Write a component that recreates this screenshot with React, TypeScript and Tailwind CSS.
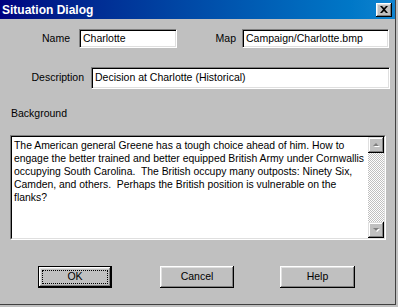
import React from "react";

const font = { fontFamily: '"Liberation Sans", Arial, sans-serif' };

function Field({ value, className }: { value: string; className: string }) {
  return (
    <div
      className={
        "bg-white border border-t-[#808080] border-l-[#808080] border-b-white border-r-white shadow-[inset_1px_1px_0_#000,inset_-1px_-1px_0_#dfdfdf] flex items-center pl-[3px] text-[10.5px] text-black whitespace-nowrap overflow-hidden " +
        className
      }
    >
      {value}
    </div>
  );
}

function Btn({ label, className, def }: { label: string; className: string; def?: boolean }) {
  return (
    <div className={"relative h-[22px] " + className + (def ? " border border-black" : "")}>
      <div className="w-full h-full bg-[#c0c0c0] shadow-[inset_-1px_-1px_0_#000,inset_1px_1px_0_#fff,inset_-2px_-2px_0_#808080,inset_2px_2px_0_#dfdfdf] flex items-center justify-center text-[10.5px] text-black">
        {label}
      </div>
      {def && <div className="absolute inset-[3px] border border-dotted border-black" />}
    </div>
  );
}

function ScrollBtn({ up }: { up?: boolean }) {
  return (
    <div className="w-[16px] h-[16px] bg-[#c0c0c0] shadow-[inset_-1px_-1px_0_#000,inset_1px_1px_0_#dfdfdf,inset_-2px_-2px_0_#808080,inset_2px_2px_0_#fff] flex items-center justify-center">
      <svg width="9" height="6" viewBox="0 0 9 6">
        {up ? (
          <>
            <polygon points="2,5 5,2 8,5" fill="#fff" />
            <polygon points="1,4 4,1 7,4" fill="#808080" />
          </>
        ) : (
          <>
            <polygon points="2,2 5,5 8,2" fill="#fff" />
            <polygon points="1,1 4,4 7,1" fill="#808080" />
          </>
        )}
      </svg>
    </div>
  );
}

const text = `The American general Greene has a tough choice ahead of him. How to
engage the better trained and better equipped British Army under Cornwallis
occupying South Carolina.  The British occupy many outposts: Ninety Six,
Camden, and others.  Perhaps the British position is vulnerable on the
flanks?`;

export default function App() {
  return (
    <div className="w-[398px] h-[307px] bg-[#c0c0c0]" style={font}>
      <div className="w-[396px] h-[305px] bg-[#c0c0c0] border-r border-b border-r-[#404040] border-b-[#404040] flex flex-col">
        {/* title bar */}
        <div className="h-[19px] w-[395px] bg-gradient-to-r from-[#000080] to-[#1084d0] flex items-center justify-between pl-[2px] pr-[3px]">
          <span className="text-white font-bold text-[12px] leading-none">Situation Dialog</span>
          <div className="w-[16px] h-[14px] bg-[#c0c0c0] shadow-[inset_-1px_-1px_0_#000,inset_1px_1px_0_#fff,inset_-2px_-2px_0_#808080,inset_2px_2px_0_#dfdfdf] flex items-center justify-center">
            <svg width="8" height="7" viewBox="0 0 8 7">
              <path d="M0 0h2l2 2 2-2h2L5 3.5 8 7H6L4 5 2 7H0l3-3.5z" fill="#000" />
            </svg>
          </div>
        </div>

        {/* row 1 */}
        <div className="flex items-center mt-[10px] text-[10.5px] text-black">
          <div className="w-[70px] text-right">Name</div>
          <Field value="Charlotte" className="ml-[9px] w-[98px] h-[19px]" />
          <div className="w-[59px] text-right">Map</div>
          <Field value="Campaign/Charlotte.bmp" className="ml-[6px] w-[147px] h-[19px]" />
        </div>

        {/* row 2 */}
        <div className="flex items-center mt-[19px] text-[10.5px] text-black">
          <div className="w-[84px] text-right">Description</div>
          <Field value="Decision at Charlotte (Historical)" className="ml-[7px] w-[299px] h-[22px]" />
        </div>

        {/* background label */}
        <div className="mt-[18px] ml-[11px] text-[10.5px] text-black leading-[13px]">Background</div>

        {/* textarea */}
        <div className="mt-[15px] ml-[10px] w-[376px] h-[105px] border border-t-[#808080] border-l-[#808080] border-b-white border-r-white">
          <div className="w-full h-full border border-t-black border-l-black border-b-[#dfdfdf] border-r-[#dfdfdf] bg-white flex">
            <div className="flex-1 pl-[2px] pt-[2px] text-[10.4px] leading-[13px] text-black whitespace-pre overflow-hidden">
              {text}
            </div>
            <div className="w-[16px] h-full flex flex-col bg-[repeating-conic-gradient(#c0c0c0_0_25%,#fff_0_50%)] bg-[length:2px_2px]">
              <ScrollBtn up />
              <div className="flex-1" />
              <ScrollBtn />
            </div>
          </div>
        </div>

        {/* buttons */}
        <div className="flex mt-[26px]">
          <Btn label="OK" className="ml-[38px] w-[74px]" def />
          <Btn label="Cancel" className="ml-[48px] w-[74px]" />
          <Btn label="Help" className="ml-[46px] w-[75px]" />
        </div>
      </div>
    </div>
  );
}
